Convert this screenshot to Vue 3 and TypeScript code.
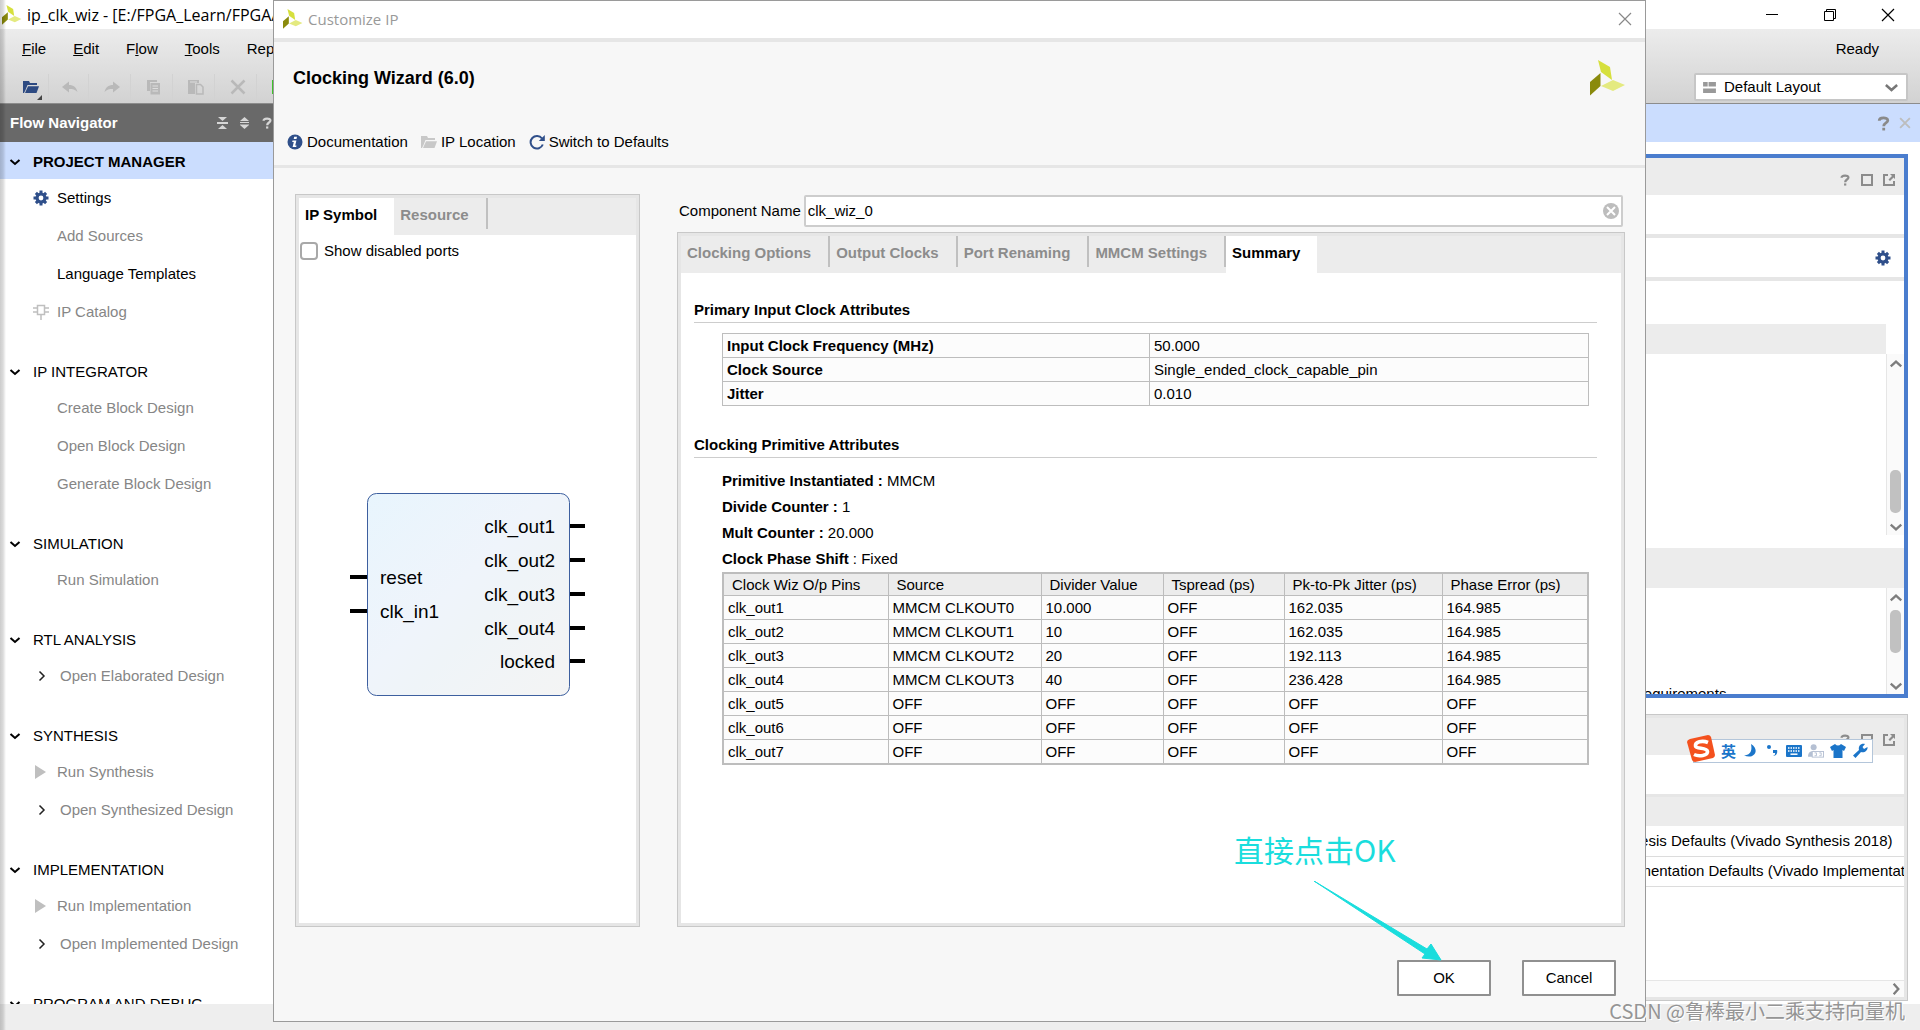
<script setup lang="ts">
import { ref } from 'vue'

interface NavItem {
  label: string
  icon?: 'gear' | 'chip' | 'play'
  expandable?: boolean
  enabled?: boolean
}
interface NavSection {
  title: string
  active?: boolean
  items: NavItem[]
}
interface Port {
  name: string
  y: number
}

const componentName = ref('clk_wiz_0')
const showDisabled = ref(false)

const menus = [
  { pre: '', key: 'F', post: 'ile' },
  { pre: '', key: 'E', post: 'dit' },
  { pre: 'F', key: 'l', post: 'ow' },
  { pre: '', key: 'T', post: 'ools' },
  { pre: 'Rep', key: 'o', post: 'rts' },
]

const tools = ['open', 'undo', 'redo', 'copy', 'paste', 'cross', 'run']

const sections: NavSection[] = [
  {
    title: 'PROJECT MANAGER',
    active: true,
    items: [
      { label: 'Settings', icon: 'gear', enabled: true },
      { label: 'Add Sources' },
      { label: 'Language Templates', enabled: true },
      { label: 'IP Catalog', icon: 'chip' },
    ],
  },
  {
    title: 'IP INTEGRATOR',
    items: [
      { label: 'Create Block Design' },
      { label: 'Open Block Design' },
      { label: 'Generate Block Design' },
    ],
  },
  { title: 'SIMULATION', items: [{ label: 'Run Simulation' }] },
  { title: 'RTL ANALYSIS', items: [{ label: 'Open Elaborated Design', expandable: true }] },
  {
    title: 'SYNTHESIS',
    items: [
      { label: 'Run Synthesis', icon: 'play' },
      { label: 'Open Synthesized Design', expandable: true },
    ],
  },
  {
    title: 'IMPLEMENTATION',
    items: [
      { label: 'Run Implementation', icon: 'play' },
      { label: 'Open Implemented Design', expandable: true },
    ],
  },
  { title: 'PROGRAM AND DEBUG', items: [] },
]

const tabs = ['Clocking Options', 'Output Clocks', 'Port Renaming', 'MMCM Settings', 'Summary']

const inputClock = [
  ['Input Clock Frequency (MHz)', '50.000'],
  ['Clock Source', 'Single_ended_clock_capable_pin'],
  ['Jitter', '0.010'],
]

const outputHead = ['Clock Wiz O/p Pins', 'Source', 'Divider Value', 'Tspread (ps)', 'Pk-to-Pk Jitter (ps)', 'Phase Error (ps)']
const outputRows = [
  ['clk_out1', 'MMCM CLKOUT0', '10.000', 'OFF', '162.035', '164.985'],
  ['clk_out2', 'MMCM CLKOUT1', '10', 'OFF', '162.035', '164.985'],
  ['clk_out3', 'MMCM CLKOUT2', '20', 'OFF', '192.113', '164.985'],
  ['clk_out4', 'MMCM CLKOUT3', '40', 'OFF', '236.428', '164.985'],
  ['clk_out5', 'OFF', 'OFF', 'OFF', 'OFF', 'OFF'],
  ['clk_out6', 'OFF', 'OFF', 'OFF', 'OFF', 'OFF'],
  ['clk_out7', 'OFF', 'OFF', 'OFF', 'OFF', 'OFF'],
]

const inputs: Port[] = [
  { name: 'reset', y: 84 },
  { name: 'clk_in1', y: 118 },
]
const outputs: Port[] = [
  { name: 'clk_out1', y: 33 },
  { name: 'clk_out2', y: 67 },
  { name: 'clk_out3', y: 101 },
  { name: 'clk_out4', y: 135 },
  { name: 'locked', y: 168 },
]
</script>

<template>
  <div class="app">
    <svg class="defs" aria-hidden="true">
      <symbol id="logo" viewBox="0 0 36 36">
        <path d="M8 0 20 7 22 20 11 12Z" fill="#d6e03d" />
        <path d="M0 22 10.500 13V26L0 35.500Z" fill="#8a8a0c" />
        <path d="M11 26 23 20 35 25 23 31Z" fill="#e4ea80" />
      </symbol>
      <symbol id="gear" viewBox="0 0 16 16">
        <g stroke="currentColor" stroke-width="3">
          <path d="M8 .5V15.500M.5 8H15.500M2.900 2.900 13.100 13.100M13.100 2.900 2.900 13.100" />
        </g>
        <circle cx="8" cy="8" r="5.500" fill="currentColor" />
        <circle cx="8" cy="8" r="2.400" fill="#fff" />
      </symbol>
      <symbol id="chip" viewBox="0 0 16 16">
        <path d="M4.500 1.500h7v9h-7ZM0 4h4M0 8h4M12 4h4M12 8h4M8 11v5" fill="none" stroke="currentColor" stroke-width="1.500" />
      </symbol>
      <symbol id="play" viewBox="0 0 16 16">
        <path d="M2 1 13 8 2 15Z" fill="currentColor" />
      </symbol>
      <symbol id="down" viewBox="0 0 12 12">
        <path d="M1.500 4 6 8 10.500 4" fill="none" stroke="currentColor" stroke-width="2" />
      </symbol>
      <symbol id="right" viewBox="0 0 12 12">
        <path d="M3.500 1.500 8 6 3.500 10.500" fill="none" stroke="currentColor" stroke-width="1.500" />
      </symbol>
      <symbol id="open" viewBox="0 0 16 16">
        <path d="M0 2h6l1 2h7v2H4.500L2.500 11 1 14H0Z" fill="currentColor" />
        <path d="M5 7.200h11L13.500 14H2Z" fill="currentColor" />
      </symbol>
      <symbol id="undo" viewBox="0 0 16 16">
        <path d="M0 8 7 2.500V6C11.500 6 14.500 8.500 15.500 13 13 10.500 11 10 7 10V13.500Z" fill="currentColor" />
      </symbol>
      <symbol id="redo" viewBox="0 0 16 16">
        <path d="M16 8 9 2.500V6C4.500 6 1.500 8.500 .5 13 3 10.500 5 10 9 10V13.500Z" fill="currentColor" />
      </symbol>
      <symbol id="copy" viewBox="0 0 16 16">
        <path d="M1 1h10v2H4v9H1Z" fill="currentColor" />
        <path d="M4.500 4H14v11.500H4.500Z" fill="currentColor" />
        <path d="M6.500 7h5.500M6.500 9.500h5.500M6.500 12h5.500" stroke="#ddd" />
      </symbol>
      <symbol id="paste" viewBox="0 0 16 16">
        <path d="M0 1h11v3H7v11H0Z" fill="currentColor" />
        <path d="M8.500 5.500h4l2.500 2.500v7H8.500Z" fill="none" stroke="currentColor" stroke-width="1.500" />
        <path d="M2 3h7" stroke="#ddd" />
      </symbol>
      <symbol id="cross" viewBox="0 0 16 16">
        <path d="M1.500 1.500 14.500 14.500M14.500 1.500 1.500 14.500" stroke="currentColor" stroke-width="2.500" />
      </symbol>
      <symbol id="run" viewBox="0 0 16 16">
        <path d="M0 1h14v14H0Z" fill="#3fc22b" />
      </symbol>
      <symbol id="help" viewBox="0 0 12 14">
        <path d="M2 4.500C2 1 10 1 10 4.200 10 6.500 6.200 6.500 6.200 9.500" fill="none" stroke="currentColor" stroke-width="2.600" />
        <path d="M4.900 11h2.600v2.500H4.900Z" fill="currentColor" />
      </symbol>
      <symbol id="square" viewBox="0 0 12 12">
        <path d="M1 1h10v10H1Z" fill="none" stroke="currentColor" stroke-width="2" />
      </symbol>
      <symbol id="float" viewBox="0 0 12 12">
        <path d="M5 1H1v10h10V7" fill="none" stroke="currentColor" stroke-width="2" />
        <path d="M7 0h5v5L10.500 3.500 7 7 5.500 5.500 9 2Z" fill="currentColor" />
      </symbol>
      <symbol id="thinx" viewBox="0 0 14 14">
        <path d="M1 1 13 13M13 1 1 13" stroke="currentColor" stroke-width="1.200" />
      </symbol>
    </svg>

    <header class="titlebar">
      <svg class="logo-s"><use href="#logo" /></svg>
      <span class="wintitle main">ip_clk_wiz - [E:/FPGA_Learn/FPGA/</span>
      <div class="wincontrols">
        <button aria-label="Minimize"><svg viewBox="0 0 14 14"><path d="M1 6.500h12" stroke="#000" /></svg></button>
        <button aria-label="Restore">
          <svg viewBox="0 0 14 14"><path d="M1.500 3.500h9v9h-9ZM3.500 3V1.500h9v9H11" fill="none" stroke="#000" /></svg>
        </button>
        <button aria-label="Close"><svg><use href="#thinx" /></svg></button>
      </div>
    </header>

    <div class="chrome">
      <div class="menurow">
        <nav class="menus">
          <a v-for="m in menus" :key="m.key" href="#">{{ m.pre }}<u>{{ m.key }}</u>{{ m.post }}</a>
        </nav>
        <span class="ready">Ready</span>
      </div>
      <div class="toolrow">
        <div class="tools">
          <button v-for="t in tools" :key="t" :class="['tool', t]" :aria-label="t">
            <svg><use :href="'#' + t" /></svg>
          </button>
        </div>
        <div class="layout">
          <svg class="layouticon" viewBox="0 0 14 12">
            <path d="M0 0h5v5H0ZM6 0h8v5H6ZM0 7h14v5H0Z" fill="#999" />
          </svg>
          <select aria-label="Layout"><option>Default Layout</option></select>
          <svg class="layoutarrow"><use href="#down" /></svg>
        </div>
      </div>
    </div>

    <div class="workspace">
      <aside class="nav">
        <div class="navhead">
          <span>Flow Navigator</span>
          <svg viewBox="0 0 12 12"><path d="M1 0h9L5.500 4ZM1 12h9L5.500 8ZM0 5h11v2H0Z" fill="#d6d6d6" /></svg>
          <svg viewBox="0 0 12 12"><path d="M1 4h9L5.500 0ZM1 8h9L5.500 12ZM1 5h9v1H1ZM1 7h9v0.500H1Z" fill="#d6d6d6" /></svg>
          <svg><use href="#help" /></svg>
        </div>
        <section v-for="s in sections" :key="s.title" :class="['group', { active: s.active }]">
          <h2><svg><use href="#down" /></svg>{{ s.title }}</h2>
          <ul>
            <li v-for="i in s.items" :key="i.label" :class="{ on: i.enabled, sub: i.expandable }">
              <svg v-if="i.icon" :class="['lead', i.icon]"><use :href="'#' + i.icon" /></svg>
              <svg v-else-if="i.expandable" class="twist"><use href="#right" /></svg>
              <span v-else class="lead"></span>
              <a href="#">{{ i.label }}</a>
            </li>
          </ul>
        </section>
      </aside>

      <main class="content">
        <div class="bluebar">
          <svg class="q"><use href="#help" /></svg>
          <svg class="x"><use href="#cross" /></svg>
        </div>
        <div class="panes">
          <section class="pane focus">
            <div class="panehead">
              <svg><use href="#help" /></svg><svg><use href="#square" /></svg><svg><use href="#float" /></svg>
            </div>
            <div class="strip"></div>
            <div class="strip gearrow"><svg><use href="#gear" /></svg></div>
            <div class="band short"></div>
            <div class="scrollarea tall">
              <div class="scrollbar">
                <svg class="up"><use href="#down" /></svg>
                <div class="thumb low"></div>
                <svg><use href="#down" /></svg>
              </div>
            </div>
            <div class="band full"></div>
            <div class="scrollarea rest">
              <p class="clipped">Requirements</p>
              <div class="scrollbar">
                <svg class="up"><use href="#down" /></svg>
                <div class="thumb"></div>
                <svg><use href="#down" /></svg>
              </div>
            </div>
          </section>
          <section class="pane runs">
            <div class="panehead">
              <svg><use href="#help" /></svg><svg><use href="#square" /></svg><svg><use href="#float" /></svg>
            </div>
            <div class="strip"></div>
            <table class="runtable">
              <colgroup><col /><col class="strategy" /></colgroup>
              <thead><tr><th></th><th></th></tr></thead>
              <tbody>
                <tr><td></td><td>Vivado Synthesis Defaults (Vivado Synthesis 2018)</td></tr>
                <tr><td></td><td>Vivado Implementation Defaults (Vivado Implementation 2018)</td></tr>
              </tbody>
            </table>
            <div class="hscroll"><svg><use href="#down" /></svg></div>
          </section>
        </div>
      </main>
    </div>
    <footer class="status"></footer>
    <div class="edge"></div>

    <div class="dialog" role="dialog" aria-label="Customize IP">
      <div class="dtitle">
        <svg class="logo-s"><use href="#logo" /></svg>
        <span class="wintitle">Customize IP</span>
        <button aria-label="Close dialog"><svg><use href="#thinx" /></svg></button>
      </div>
      <div class="dhead">
        <div class="dheadrow">
          <h1>Clocking Wizard (6.0)</h1>
          <svg class="logo-l"><use href="#logo" /></svg>
        </div>
        <div class="links">
          <a href="#">
            <svg viewBox="0 0 16 16">
              <circle cx="8" cy="8" r="7.500" fill="#2f4f8a" />
              <path d="M7.200 2.800h2.800l-.5 2.200H6.700ZM5.500 6.500H9.400L8.200 11.500H9.500L9.200 13H5.600L6.800 8H5.200Z" fill="#fff" />
            </svg>Documentation
          </a>
          <a href="#"><svg class="gray"><use href="#open" /></svg>IP Location</a>
          <a href="#">
            <svg viewBox="0 0 16 16">
              <path d="M13 4.500A6.300 6.300 0 1 0 13.800 10.500" fill="none" stroke="#2f4f8a" stroke-width="2" />
              <path d="M15.800 1V7H9.800Z" fill="#2f4f8a" />
            </svg>Switch to Defaults
          </a>
        </div>
      </div>
      <div class="dbody">
        <section class="box symbolbox">
          <div class="tabs">
            <button class="tab current">IP Symbol</button>
            <button class="tab">Resource</button>
          </div>
          <label class="check"><input v-model="showDisabled" type="checkbox" />Show disabled ports</label>
          <div class="canvas">
            <svg width="236" height="204" viewBox="0 0 236 204">
              <defs>
                <linearGradient id="face" x1="0" y1="0" x2="1" y2="1">
                  <stop offset="0" stop-color="#e8f5fd" />
                  <stop offset=".45" stop-color="#eff4fb" />
                  <stop offset=".6" stop-color="#eff4f8" />
                  <stop offset="1" stop-color="#f4f4f4" />
                </linearGradient>
              </defs>
              <rect x="17.500" y=".5" width="202" height="202" rx="9" fill="url(#face)" stroke="#3d5f9f" />
              <g v-for="p in inputs" :key="p.name">
                <path :d="`M0 ${p.y}h17`" stroke="#000" stroke-width="4" />
                <text x="30" :y="p.y + 7">{{ p.name }}</text>
              </g>
              <g v-for="p in outputs" :key="p.name">
                <path :d="`M220 ${p.y}h15`" stroke="#000" stroke-width="4" />
                <text x="205" :y="p.y + 7" text-anchor="end">{{ p.name }}</text>
              </g>
            </svg>
          </div>
        </section>

        <section class="config">
          <div class="namerow">
            <label for="cname">Component Name</label>
            <div class="namefield">
              <input id="cname" v-model="componentName" type="text" />
              <button aria-label="Clear">
                <svg viewBox="0 0 16 16">
                  <circle cx="8" cy="8" r="8" fill="#bdbdbd" />
                  <path d="M4 4 12 12M12 4 4 12" stroke="#fff" stroke-width="2" />
                </svg>
              </button>
            </div>
          </div>
          <div class="box summary">
            <div class="tabs">
              <button v-for="t in tabs" :key="t" :class="['tab', { current: t === 'Summary' }]">{{ t }}</button>
            </div>
            <div class="sheet">
              <h3>Primary Input Clock Attributes</h3>
              <table class="grid attrs">
                <colgroup><col class="c-name" /><col /></colgroup>
                <tbody>
                  <tr v-for="r in inputClock" :key="r[0]"><th scope="row">{{ r[0] }}</th><td>{{ r[1] }}</td></tr>
                </tbody>
              </table>
              <h3>Clocking Primitive Attributes</h3>
              <div class="facts">
                <p><b>Primitive Instantiated :</b> MMCM</p>
                <p><b>Divide Counter :</b> 1</p>
                <p><b>Mult Counter :</b> 20.000</p>
                <p><b>Clock Phase Shift</b> : Fixed</p>
              </div>
              <table class="grid outs">
                <colgroup>
                  <col class="c1" /><col class="c2" /><col class="c3" /><col class="c4" /><col class="c5" /><col />
                </colgroup>
                <thead><tr><th v-for="h in outputHead" :key="h" scope="col">{{ h }}</th></tr></thead>
                <tbody>
                  <tr v-for="r in outputRows" :key="r[0]"><td v-for="(c, k) in r" :key="k">{{ c }}</td></tr>
                </tbody>
              </table>
            </div>
          </div>
        </section>
      </div>
      <div class="actions">
        <button>OK</button>
        <button>Cancel</button>
      </div>
      <div class="note">
        <span>直接点击OK</span>
        <svg width="128" height="80" viewBox="0 0 128 80">
          <path d="M0 0 113 68 117 63 127 79 108 77 111 73Z" fill="#1adddd" stroke="#1adddd" />
        </svg>
      </div>
    </div>

    <div class="ime">
      <svg class="sogou" viewBox="0 0 28 28">
        <path d="M3 4 21 0Q23 0 24 2L28 20Q28 22 26 23L8 27Q6 27 5 25L0 7Q0 5 3 4Z" fill="#f4511e" />
        <path d="M21 7.500C15 5 8 7 8.500 11 9 14.500 20 12 20.500 16.500 21 20.500 12 22 7 19.500" fill="none" stroke="#fff" stroke-width="3.600" />
      </svg>
      <span class="ying">英</span>
      <svg viewBox="0 0 16 16"><path d="M9 1C18 6 13 17 2 12.500 8 12 10.500 8 9 1Z" fill="#1b75c9" /></svg>
      <svg viewBox="0 0 16 16">
        <circle cx="5" cy="4" r="2" fill="#1b75c9" />
        <path d="M9 7h4c1 3-1 6-4 6 2-1 2.500-2 2-3H9Z" fill="#1b75c9" />
      </svg>
      <svg class="wide" viewBox="0 0 16 12">
        <rect width="16" height="12" rx="1" fill="#1b75c9" />
        <path d="M2 3h12M2 6h12" stroke="#fff" stroke-width="1.500" stroke-dasharray="1.500 1" />
        <path d="M4.500 9.200h7" stroke="#fff" stroke-width="1.500" />
      </svg>
      <svg viewBox="0 0 17 16">
        <circle cx="6" cy="4" r="3.200" fill="#b5c0d3" />
        <path d="M0 14C0 9 3 8 7 8v6Z" fill="#b5c0d3" />
        <rect x="4.500" y="8.500" width="12" height="6" fill="#fff" stroke="#b5c0d3" />
        <path d="M7 10h2v3H7M12 10h2v3H12" fill="none" stroke="#b5c0d3" />
      </svg>
      <svg viewBox="0 0 16 16"><path d="M5 1Q8 4 11 1L16 4 14 8 12.500 7V15H3.500V7L2 8 0 4Z" fill="#1b75c9" /></svg>
      <svg viewBox="0 0 16 16">
        <path d="M13 1 10.500 4 12 6 15.500 4C16 8 12 10 9 9L3.500 15 1 12.500 7 7C6 3 9 0 13 1Z" fill="#1b75c9" />
      </svg>
    </div>
    <div class="mark">CSDN @鲁棒最小二乘支持向量机</div>
  </div>
</template>

<style>
body {
  margin: 0;
  overflow: hidden;
}
</style>

<style scoped>
.app {
  position: relative;
  display: flex;
  flex-direction: column;
  height: 100vh;
  overflow: hidden;
  background: #fff;
  color: #000;
  font: 15px/20px "Liberation Sans", Arial, sans-serif;
}
.app * {
  box-sizing: border-box;
}
.defs {
  position: absolute;
  width: 0;
  height: 0;
}
svg {
  flex: none;
  display: block;
}
button {
  font: inherit;
  padding: 0;
  border: 0;
  background: none;
}
a {
  color: inherit;
  text-decoration: none;
}
h1, h2, h3, p, ul {
  margin: 0;
  padding: 0;
}
.titlebar {
  display: flex;
  align-items: center;
  height: 29px;
  flex: none;
  padding-left: 2px;
}
.logo-s {
  width: 20px;
  height: 20px;
}
.wintitle {
  font: 15px/20px "Open Sans", "Noto Sans", sans-serif;
  margin-left: 5px;
  white-space: nowrap;
}
.wintitle.main {
  font-size: 16px;
}
.wincontrols {
  display: flex;
  margin-left: auto;
  padding-right: 3px;
}
.wincontrols button {
  width: 58px;
  display: flex;
  justify-content: center;
}
.wincontrols svg {
  width: 14px;
  height: 14px;
}
.chrome {
  height: 75px;
  flex: none;
  border-bottom: 1px solid #8c8c8c;
  background: linear-gradient(#ececec, #d2d2d2);
}
.menurow {
  display: flex;
  align-items: center;
  justify-content: space-between;
  height: 40px;
  padding: 0 41px 0 22px;
}
.menus {
  display: flex;
  gap: 27px;
}
.toolrow {
  display: flex;
  align-items: center;
  justify-content: space-between;
  height: 34px;
  padding: 1px 12px 0 5px;
}
.tools {
  display: flex;
}
.tool {
  position: relative;
  width: 42px;
  height: 26px;
  display: flex;
  align-items: center;
  justify-content: flex-start;
  padding-left: 15px;
  border-right: 1px solid #d2d2d2;
  color: #b9b9b9;
}
.tool svg {
  width: 16px;
  height: 16px;
}
.tool.open {
  width: 44px;
  padding-left: 18px;
  margin-right: -2px;
  color: #2d4a82;
}
.tool.open::after {
  content: "";
  position: absolute;
  right: 6px;
  bottom: 0;
  border-left: 5px solid transparent;
  border-bottom: 5px solid #444;
}
.layout {
  position: relative;
}
.layout select {
  appearance: none;
  width: 214px;
  height: 28px;
  padding: 0 28px;
  border: 2px solid #c6c6c6;
  border-radius: 2px;
  background: #fff;
  color: #000;
  font: inherit;
}
.layouticon {
  position: absolute;
  left: 9px;
  top: 9px;
  width: 13px;
  height: 11px;
}
.layoutarrow {
  position: absolute;
  right: 9px;
  top: 7px;
  width: 15px;
  height: 15px;
  color: #777;
}
.workspace {
  display: flex;
  flex: 1;
  min-height: 0;
}
.nav {
  width: 274px;
  flex: none;
  overflow: hidden;
}
.navhead {
  display: flex;
  align-items: center;
  gap: 10px;
  height: 38px;
  padding: 0 1px 0 10px;
  background: #696969;
  color: #fff;
  font-weight: bold;
}
.navhead span {
  margin-right: auto;
}
.navhead svg {
  width: 12px;
  height: 12px;
  color: #d6d6d6;
}
.group {
  margin-bottom: 24px;
}
.group h2 {
  display: flex;
  align-items: center;
  height: 34px;
  padding-left: 9px;
  font-size: 15px;
  font-weight: normal;
}
.group.active h2 {
  height: 37px;
  padding-top: 3px;
  background: #cbddfe;
  font-weight: bold;
}
.group h2 svg {
  width: 12px;
  height: 12px;
  margin-right: 12px;
}
.group ul {
  list-style: none;
}
.group li {
  display: flex;
  align-items: center;
  height: 38px;
  padding-left: 33px;
  color: #868686;
}
.group li.on {
  color: #000;
}
.lead {
  width: 16px;
  height: 16px;
  margin-right: 8px;
  color: #bfbfbf;
}
.lead.gear {
  color: #2f4f8a;
}
.twist {
  width: 12px;
  height: 12px;
  margin: 0 12px 0 3px;
  color: #222;
}
.content {
  flex: 1;
  min-width: 0;
  display: flex;
  flex-direction: column;
}
.bluebar {
  display: flex;
  align-items: center;
  justify-content: flex-end;
  gap: 9px;
  height: 38px;
  padding-right: 9px;
  background: #cbddfe;
}
.bluebar .q {
  width: 13px;
  height: 15px;
  color: #8a8a8a;
}
.bluebar .x {
  width: 12px;
  height: 12px;
  color: #bdbdbd;
}
.panes {
  flex: 1;
  min-height: 0;
  display: flex;
  flex-direction: column;
  gap: 16px;
  padding: 12px 12px 3px;
}
.pane {
  display: flex;
  flex-direction: column;
  overflow: hidden;
  min-height: 0;
}
.focus {
  flex: 536 0 0;
  border: 4px solid #4a7dce;
}
.runs {
  flex: 279 0 0;
  border: 1px solid #c8c8c8;
  box-shadow: inset 0 0 0 3px #e6e6e6;
  padding: 3px;
}
.panehead {
  display: flex;
  align-items: center;
  justify-content: flex-end;
  gap: 10px;
  height: 37px;
  flex: none;
  padding: 6px 9px 0 0;
  background: #ececec;
  color: #8c8c8c;
}
.panehead svg {
  width: 12px;
  height: 12px;
}
.strip {
  height: 43px;
  flex: none;
  border-bottom: 4px solid #e6e6e6;
}
.runs .strip {
  height: 42px;
  border-bottom-width: 3px;
}
.gearrow {
  display: flex;
  align-items: center;
  justify-content: flex-end;
  padding-right: 13px;
  color: #2f4f8a;
}
.gearrow svg {
  width: 16px;
  height: 16px;
}
.band {
  background: #ececec;
  flex: none;
}
.band.short {
  height: 30px;
  margin: 43px 18px 0 0;
}
.band.full {
  height: 40px;
  margin-top: 13px;
}
.scrollarea {
  display: flex;
  justify-content: flex-end;
  min-height: 0;
  overflow: hidden;
}
.tall {
  flex: 181 0 0;
}
.rest {
  flex: 106 0 0;
}
.scrollbar {
  display: flex;
  flex-direction: column;
  align-items: center;
  width: 18px;
  padding: 3px 0 1px;
  border-left: 1px solid #e6e6e6;
  background: #fafafa;
  color: #7d7d7d;
}
.scrollbar svg {
  width: 14px;
  height: 14px;
}
.scrollbar svg.up {
  transform: rotate(180deg);
}
.thumb {
  width: 11px;
  height: 43px;
  margin: 5px 0 auto;
  border-radius: 5px;
  background: #c1c1c1;
}
.thumb.low {
  margin: auto 0 7px;
}
.clipped {
  width: 253px;
  padding-top: 96px;
}
.runtable {
  width: 100%;
  table-layout: fixed;
  border-collapse: collapse;
}
.strategy {
  width: 352px;
}
.runtable th {
  height: 29px;
  padding: 0;
  background: #ececec;
}
.runtable td {
  height: 30px;
  padding: 0;
  border-bottom: 1px solid #dcdcdc;
  white-space: nowrap;
  overflow: hidden;
}
.runs .hscroll {
  display: flex;
  align-items: center;
  justify-content: flex-end;
  height: 17px;
  margin-top: auto;
  padding-right: 1px;
  border-top: 1px solid #e6e6e6;
  background: #fafafa;
  color: #7d7d7d;
}
.hscroll svg {
  width: 14px;
  height: 14px;
  transform: rotate(-90deg);
}
.status {
  height: 26px;
  flex: none;
  background: #eee;
}
.edge {
  position: absolute;
  inset: 0 auto 0 0;
  width: 6px;
  background: linear-gradient(90deg, rgba(0, 0, 0, 0.2), rgba(0, 0, 0, 0.14) 50%, transparent);
}
.dialog {
  position: absolute;
  inset: 0 274px 8px 273px;
  display: flex;
  flex-direction: column;
  border: 1px solid #9a9a9a;
  background: #f7f7f7;
}
.dtitle {
  display: flex;
  align-items: center;
  height: 41px;
  flex: none;
  padding: 0 13px 2px 9px;
  border-bottom: 4px solid #e6e6e6;
  background: #fff;
  color: #999;
}
.dtitle button {
  margin-left: auto;
  color: #888;
}
.dtitle button svg {
  width: 14px;
  height: 14px;
}
.dhead {
  height: 126px;
  flex: none;
  padding: 18px 19px 0;
  border-bottom: 3px solid #e6e6e6;
}
.dheadrow {
  display: flex;
  justify-content: space-between;
  align-items: center;
}
h1 {
  font-size: 18px;
  line-height: 36px;
}
.logo-l {
  width: 36px;
  height: 36px;
}
.links {
  display: flex;
  gap: 13px;
  padding: 36px 0 0;
  margin-left: -6px;
}
.links a {
  display: flex;
  align-items: center;
  gap: 4px;
}
.links svg {
  width: 16px;
  height: 16px;
}
.links svg.gray {
  color: #c8c8c8;
}
.dbody {
  flex: 1;
  min-height: 0;
  display: flex;
  gap: 37px;
  padding: 26px 20px 0 21px;
}
.box {
  display: flex;
  flex-direction: column;
  border: 1px solid #c8c8c8;
  box-shadow: inset 0 0 0 3px #e6e6e6;
  padding: 3px;
  background: #fff;
}
.symbolbox {
  width: 345px;
  flex: none;
}
.tabs {
  display: flex;
  align-items: flex-start;
  height: 37px;
  flex: none;
  background: #ececec;
}
.tab {
  height: 31px;
  padding: 3px 17px 0 6px;
  border-right: 2px solid #c0c0c0;
  color: #8c8c8c;
  font-weight: bold;
  white-space: nowrap;
}
.tab.current {
  height: 37px;
  padding: 0 17px 3px 6px;
  border-right: 0;
  background: #fff;
  color: #000;
}
.check {
  display: flex;
  align-items: center;
  gap: 6px;
  height: 32px;
  padding-left: 1px;
}
.check input {
  appearance: none;
  width: 18px;
  height: 18px;
  margin: 0;
  border: 2px solid #a8a8a8;
  border-radius: 4px;
  background: #fff;
}
.canvas {
  flex: 1;
  display: flex;
  align-items: center;
  justify-content: center;
  font-size: 19px;
}
.config {
  flex: 1;
  min-width: 0;
  display: flex;
  flex-direction: column;
  gap: 5px;
}
.namerow {
  display: flex;
  align-items: center;
  gap: 3px;
  height: 33px;
  padding: 0 2px;
}
.namefield {
  position: relative;
  flex: 1;
}
.namefield input {
  display: block;
  width: 100%;
  height: 32px;
  padding: 0 32px 0 2px;
  border: 2px solid #cdcdcd;
  border-radius: 2px;
  font: inherit;
  color: #000;
}
.namefield button {
  position: absolute;
  right: 4px;
  top: 8px;
}
.namefield button svg {
  width: 16px;
  height: 16px;
}
.summary {
  flex: 1;
}
.sheet {
  padding: 27px 24px 0 13px;
}
h3 {
  padding-bottom: 2px;
  border-bottom: 1px solid #cdcdcd;
  font-size: 15px;
  line-height: 20px;
}
.grid {
  table-layout: fixed;
  width: calc(100% - 36px);
  margin-left: 28px;
  border-collapse: collapse;
  background: #fcfcfc;
}
.grid th,
.grid td {
  height: 24px;
  padding: 1px 0 0 4px;
  border: 1px solid #bdbdbd;
  line-height: 20px;
  text-align: left;
  white-space: nowrap;
}
.attrs {
  margin-top: 10px;
  margin-bottom: 29px;
}
.c-name {
  width: 427px;
}
.facts {
  padding: 10px 0 0 28px;
  line-height: 26px;
}
.outs {
  border: 2px solid #bdbdbd;
}
.outs th {
  padding: 1px 0 0 8px;
  height: 22px;
  background: #ececec;
  font-weight: normal;
}
.c1 { width: 165px; }
.c2 { width: 153px; }
.c3 { width: 122px; }
.c4 { width: 121px; }
.c5 { width: 158px; }
.actions {
  display: flex;
  justify-content: flex-end;
  gap: 31px;
  padding: 33px 29px 25px;
}
.actions button {
  width: 94px;
  height: 36px;
  border: 2px solid #909090;
  border-radius: 1px;
  background: #fff;
  color: #000;
}
.note {
  position: absolute;
  right: 203px;
  bottom: 60px;
  display: flex;
  flex-direction: column;
  width: 208px;
  color: #1adddd;
  font: 30px/44px "Noto Sans CJK SC", sans-serif;
  pointer-events: none;
}
.note svg {
  align-self: flex-end;
  margin-top: 10px;
}
.ime {
  position: absolute;
  right: 47px;
  top: 739px;
  display: flex;
  align-items: center;
  gap: 6px;
  height: 24px;
  padding: 0 4px 0 27px;
  border: 1px solid #b4c6da;
  background: #fff;
  color: #1b75c9;
}
.ime svg {
  width: 16px;
  height: 16px;
}
.ime .sogou {
  position: absolute;
  left: -7px;
  top: -5px;
  width: 28px;
  height: 28px;
}
.ime .wide {
  height: 12px;
}
.ying {
  font: bold 15px/20px "Noto Sans CJK SC", sans-serif;
}
.mark {
  position: absolute;
  right: 15px;
  bottom: 5px;
  color: #959595;
  font: 20px/28px "Noto Sans CJK SC", sans-serif;
  text-shadow: 1px 1px 0 #fff;
}
</style>
